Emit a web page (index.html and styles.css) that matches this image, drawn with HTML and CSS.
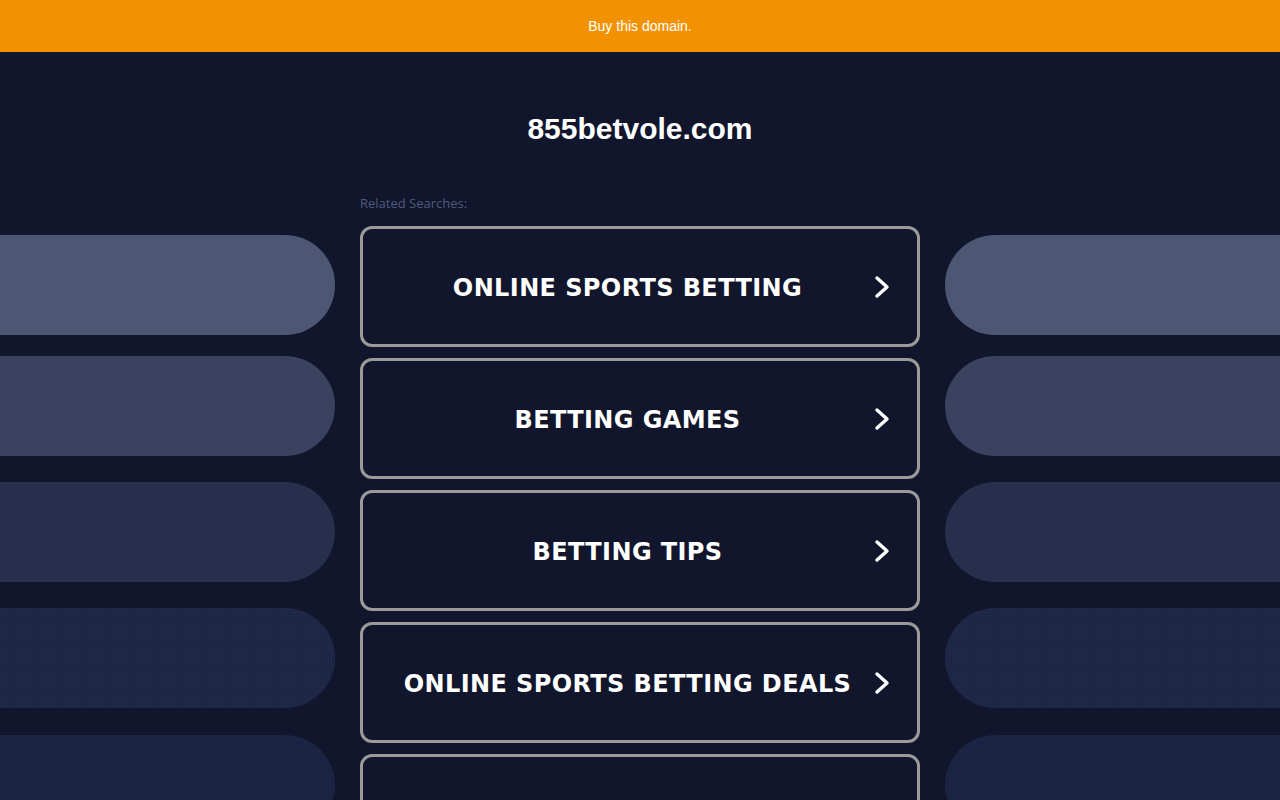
FILE: index.html
```html
<!DOCTYPE html>
<html lang="en">
<head>
<meta charset="utf-8">
<title>855betvole.com</title>
<link rel="stylesheet" href="styles.css">
</head>
<body>
<div class="topbar"><a class="buy" href="#">Buy this domain.</a></div>
<div class="stage">
  <div class="side side-left">
    <div class="pill p1"></div>
    <div class="pill p2"></div>
    <div class="pill p3"></div>
    <div class="pill p4"></div>
    <div class="pill p5"></div>
  </div>
  <main class="center">
    <h1 class="domain">855betvole.com</h1>
    <div class="related">Related Searches:</div>
    <div class="list">
      <a class="item" href="#"><span class="label">ONLINE SPORTS BETTING</span><svg class="chev" viewBox="0 0 16 24" width="16" height="24"><path d="M3 3 L13 12 L3 21" fill="none" stroke="#fff" stroke-width="3.4" stroke-linecap="round" stroke-linejoin="round"/></svg></a>
      <a class="item" href="#"><span class="label">BETTING GAMES</span><svg class="chev" viewBox="0 0 16 24" width="16" height="24"><path d="M3 3 L13 12 L3 21" fill="none" stroke="#fff" stroke-width="3.4" stroke-linecap="round" stroke-linejoin="round"/></svg></a>
      <a class="item" href="#"><span class="label">BETTING TIPS</span><svg class="chev" viewBox="0 0 16 24" width="16" height="24"><path d="M3 3 L13 12 L3 21" fill="none" stroke="#fff" stroke-width="3.4" stroke-linecap="round" stroke-linejoin="round"/></svg></a>
      <a class="item" href="#"><span class="label">ONLINE SPORTS BETTING DEALS</span><svg class="chev" viewBox="0 0 16 24" width="16" height="24"><path d="M3 3 L13 12 L3 21" fill="none" stroke="#fff" stroke-width="3.4" stroke-linecap="round" stroke-linejoin="round"/></svg></a>
      <a class="item item-last" href="#"></a>
    </div>
  </main>
  <div class="side side-right">
    <div class="pill p1"></div>
    <div class="pill p2"></div>
    <div class="pill p3"></div>
    <div class="pill p4"></div>
    <div class="pill p5"></div>
  </div>
</div>
</body>
</html>
```
FILE: styles.css
```css
html, body {
  margin: 0;
  padding: 0;
  height: 100%;
  overflow: hidden;
}
body {
  background: #11162c;
  font-family: "Liberation Sans", Arial, sans-serif;
  color: #fff;
}
.topbar {
  height: 52px;
  background: #f39200;
  display: flex;
  align-items: center;
  justify-content: center;
}
.buy {
  color: #fff;
  text-decoration: none;
  font-size: 14px;
  font-family: "Liberation Sans", Arial, sans-serif;
}
.stage {
  display: flex;
  justify-content: space-between;
}
.side {
  width: 335px;
  display: flex;
  flex-direction: column;
  padding-top: 183px;
}
.pill {
  height: 100px;
  flex: none;
}
.side-left .pill { border-radius: 0 50px 50px 0; }
.side-right .pill { border-radius: 50px 0 0 50px; }
.p1 { background: #4d5773; }
.p2 { background: #3a4260; margin-top: 21px; }
.p3 { background: #272f4d; margin-top: 26px; }
.p4 {
  margin-top: 26px;
  background-color: #1e2645;
  background-image: radial-gradient(circle, rgba(60,72,115,0.25) 0.5px, transparent 0.9px);
  background-size: 3px 3px;
}
.p5 {
  margin-top: 27px;
  background-color: #1c2444;
  background-image: radial-gradient(circle, rgba(10,14,35,0.45) 0.6px, transparent 1px);
  background-size: 5px 5px;
}
.center {
  width: 560px;
  flex: none;
  display: flex;
  flex-direction: column;
}
.domain {
  margin: 59px 0 0;
  height: 36px;
  line-height: 36px;
  text-align: center;
  font-family: "Liberation Sans", Arial, sans-serif;
  font-weight: bold;
  font-size: 30px;
  color: #fff;
}
.related {
  margin-top: 48px;
  font-family: "Open Sans", "Liberation Sans", sans-serif;
  font-size: 13px;
  line-height: 16px;
  color: #4f5a7d;
}
.list {
  margin-top: 15px;
  display: flex;
  flex-direction: column;
  gap: 11px;
}
.item {
  box-sizing: border-box;
  height: 121px;
  flex: none;
  border: 3px solid #9a9a9a;
  border-radius: 12px;
  display: flex;
  align-items: center;
  padding: 0 27px 0 27px;
  text-decoration: none;
  color: #fff;
}
.label {
  flex: 1;
  text-align: center;
  font-family: "DejaVu Sans", Verdana, sans-serif;
  font-weight: bold;
  font-size: 24px;
  letter-spacing: 0.4px;
  margin-right: 9px;
  padding-top: 2px;
}
.chev {
  flex: none;
  display: block;
}
```
